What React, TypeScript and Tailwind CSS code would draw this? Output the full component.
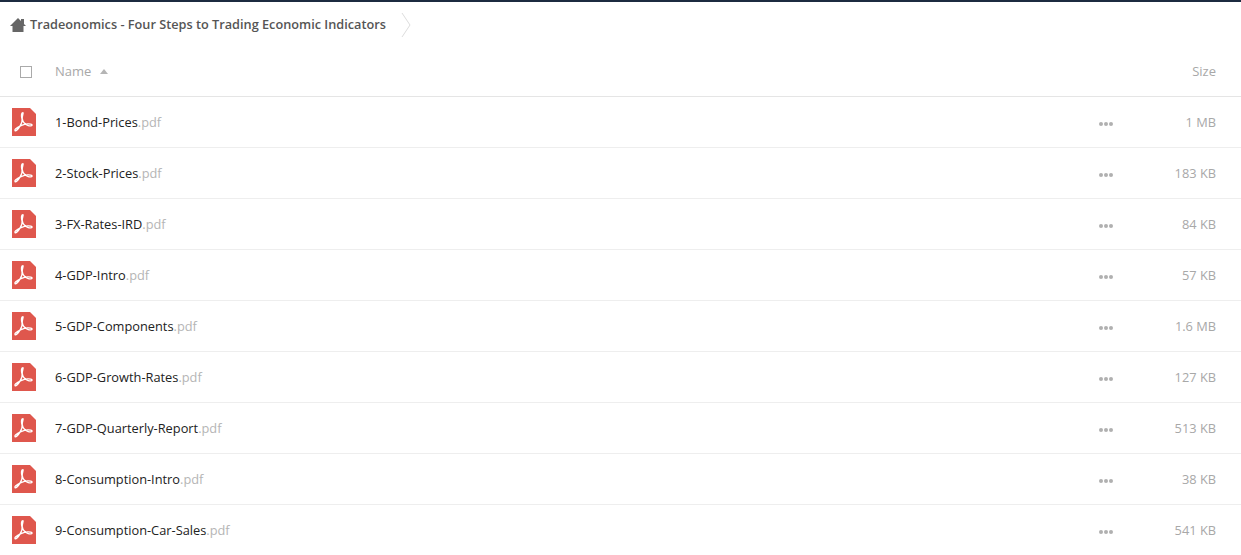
const files = [
  { name: '1-Bond-Prices', size: '1 MB' },
  { name: '2-Stock-Prices', size: '183 KB' },
  { name: '3-FX-Rates-IRD', size: '84 KB' },
  { name: '4-GDP-Intro', size: '57 KB' },
  { name: '5-GDP-Components', size: '1.6 MB' },
  { name: '6-GDP-Growth-Rates', size: '127 KB' },
  { name: '7-GDP-Quarterly-Report', size: '513 KB' },
  { name: '8-Consumption-Intro', size: '38 KB' },
  { name: '9-Consumption-Car-Sales', size: '541 KB' },
]

function PdfIcon() {
  return (
    <svg width="24" height="28" viewBox="0 0 24 28" className="shrink-0">
      <path d="M0 0H18L24 6V28H0Z" fill="#df574d" />
      <path
        d="M10.8 4.6c-1.7 0-1.5 3.6-.7 6.6c.7 3-3 9.2-5.6 11.2c-1.4 1-2.1-.2-1-1.3c2.5-2.6 8.2-5 12.2-5.2c2.2-.1 4.6.4 4.3 1.4c-.3 1-2.6.6-4.3 0c-2.6-1-5.1-4-5.5-6.6c-.4-2.4 1.6-6.1.6-6.1z"
        fill="none"
        stroke="#fff"
        strokeWidth="1.4"
      />
    </svg>
  )
}

function FileRow({ name, size }: { name: string; size: string }) {
  return (
    <div className="flex h-[51px] items-center border-b border-[#eeeeee] pl-3 pr-[25px]">
      <PdfIcon />
      <div className="ml-[19px] flex-1 pt-[2px] text-[12.8px] text-[#222222]">
        {name}
        <span className="text-[#b5b5b5]">.pdf</span>
      </div>
      <div className="mt-[3px] flex w-[15px] gap-px">
        <span className="size-1 rounded-full bg-[#b0b0b0]" />
        <span className="size-1 rounded-full bg-[#b0b0b0]" />
        <span className="size-1 rounded-full bg-[#b0b0b0]" />
      </div>
      <div className="w-[102px] pt-[2px] text-right text-[12.8px] text-[#a8a8a8]">{size}</div>
    </div>
  )
}

export default function App() {
  return (
    <div className="h-[555px] overflow-hidden border-t-2 border-[#1c2b40] bg-white font-['Open_Sans',sans-serif]">
      <div className="flex h-[45px] items-center pl-[10px]">
        <svg width="16" height="14" viewBox="0 0 16 14" className="shrink-0">
          <path d="M8 0L11 3V1H14V6L16 8H13.5V14H2.5V8H0Z" fill="#666666" />
        </svg>
        <span className="ml-1 text-[12.72px] font-semibold text-[#555555]">
          Tradeonomics - Four Steps to Trading Economic Indicators
        </span>
        <svg width="10" height="26" viewBox="0 0 10 26" className="ml-[15px] shrink-0">
          <path d="M1 1L9 13L1 25" fill="none" stroke="#dddddd" />
        </svg>
      </div>
      <div className="flex h-[50px] items-center border-b border-[#e5e5e5] pl-5 pr-[25px] text-[13px] text-[#a8a8a8]">
        <span className="size-3 border border-[#aaaaaa]" />
        <span className="ml-[23px]">Name</span>
        <span className="ml-[9px] h-0 w-0 border-x-4 border-b-[5px] border-x-transparent border-b-[#b5b5b5]" />
        <span className="ml-auto">Size</span>
      </div>
      {files.map((file) => (
        <FileRow key={file.name} name={file.name} size={file.size} />
      ))}
    </div>
  )
}
